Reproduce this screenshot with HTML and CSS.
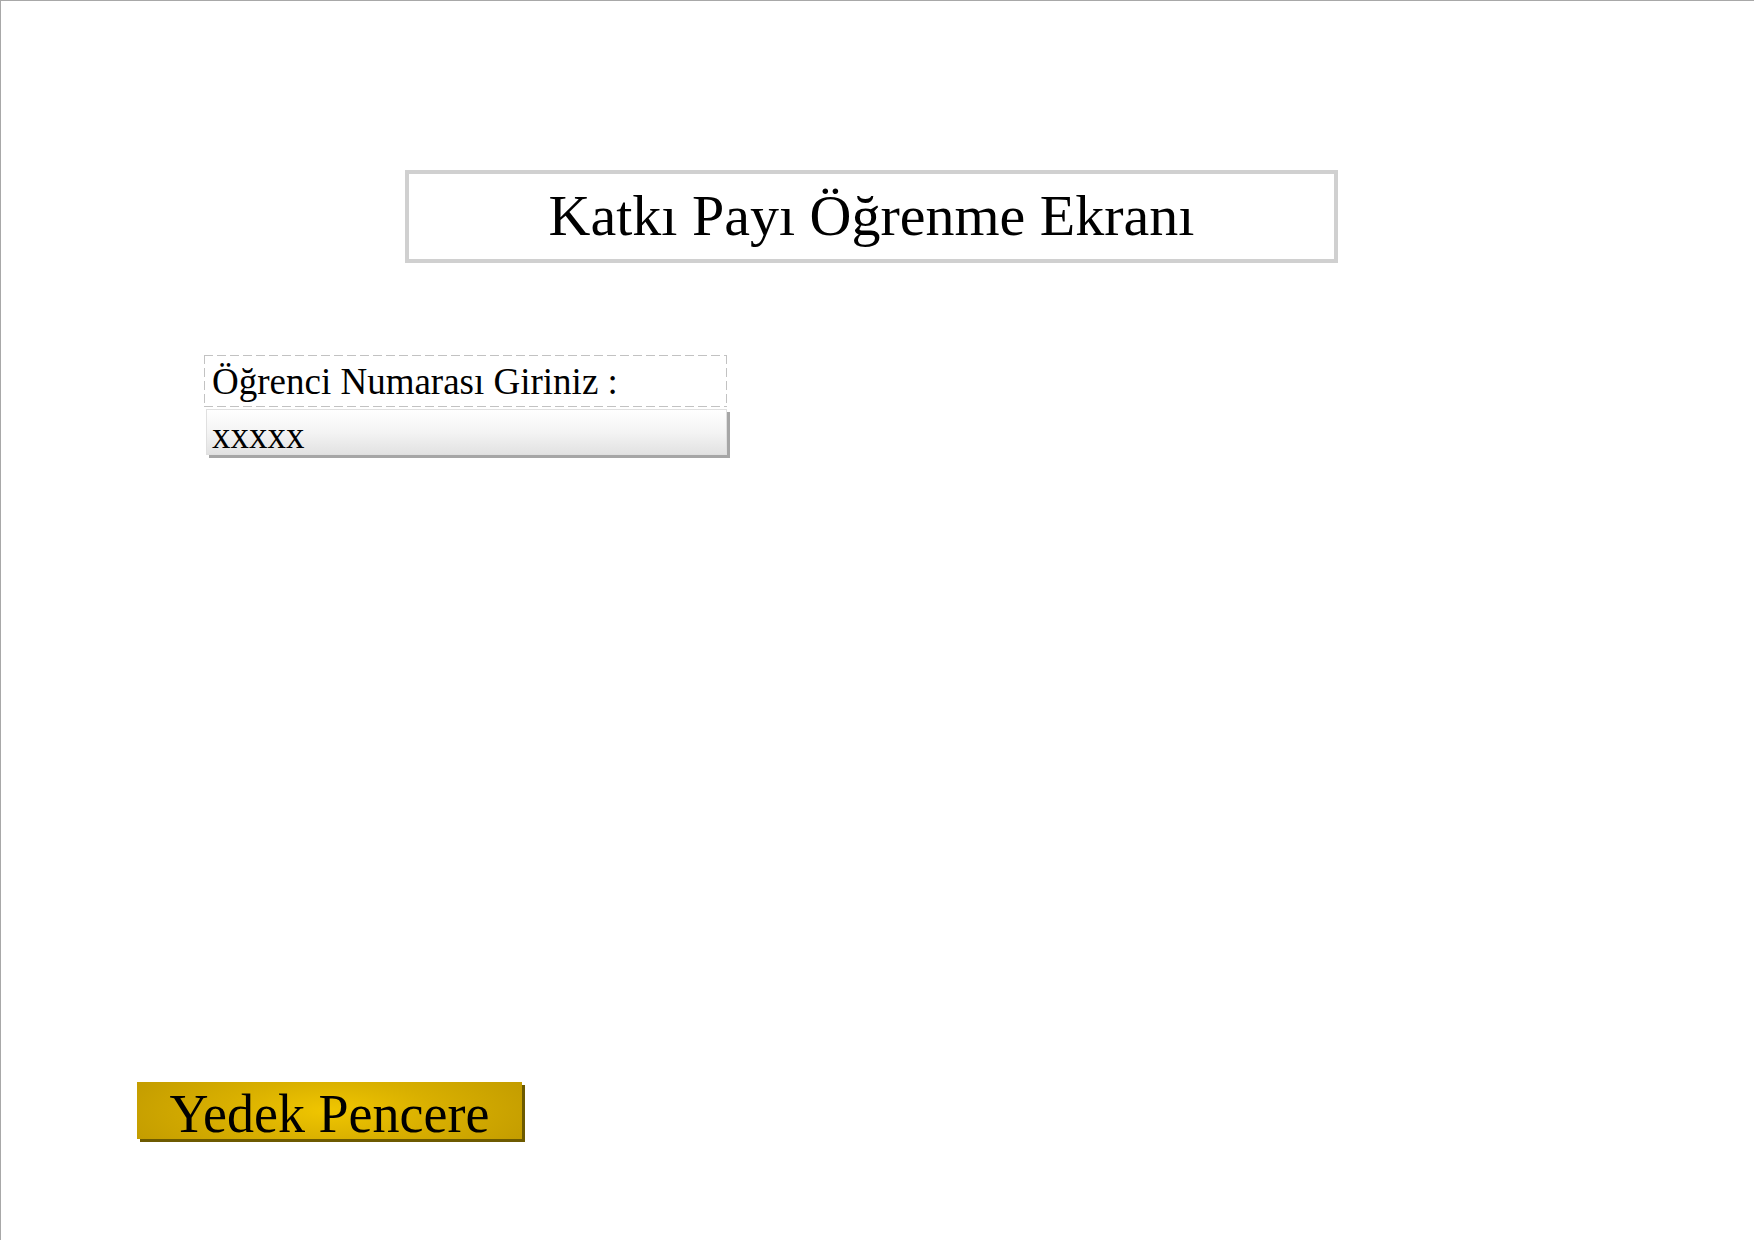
FILE: index.html
```html
<!DOCTYPE html>
<html lang="tr">
<head>
<meta charset="utf-8">
<title>Katkı Payı Öğrenme Ekranı</title>
<link rel="stylesheet" href="styles.css">
</head>
<body>
<div class="page">
  <div class="title-box"><h1 class="title">Katkı Payı Öğrenme Ekranı</h1></div>
  <div class="field">
    <div class="label">Öğrenci Numarası Giriniz :</div>
    <div class="input">xxxxx</div>
  </div>
  <div class="button">Yedek Pencere</div>
</div>
</body>
</html>
```
FILE: styles.css
```css
html, body {
  margin: 0;
  padding: 0;
  background: #ffffff;
}
.page {
  box-sizing: border-box;
  width: 1754px;
  height: 1240px;
  border-top: 1px solid #a8a8a8;
  border-left: 1px solid #a8a8a8;
  font-family: "Liberation Serif", "Times New Roman", serif;
  color: #000;
  display: flex;
  flex-direction: column;
  align-items: flex-start;
  padding-top: 169px;
}
.title-box {
  box-sizing: border-box;
  margin-left: 404px;
  width: 933px;
  height: 93px;
  border: 4px solid #d0d0d0;
  display: flex;
  align-items: center;
  justify-content: center;
}
.title {
  margin: 0;
  font-weight: normal;
  font-size: 58px;
  line-height: 58px;
  margin-top: -2px;
}
.field {
  margin-left: 203px;
  margin-top: 92px;
  display: flex;
  flex-direction: column;
  align-items: flex-start;
}
.label {
  box-sizing: border-box;
  width: 523px;
  height: 52px;
  background-image:
    repeating-linear-gradient(to right, #c2c2c2 0 9px, transparent 9px 13px),
    repeating-linear-gradient(to right, #c2c2c2 0 9px, transparent 9px 13px),
    repeating-linear-gradient(to bottom, #c2c2c2 0 9px, transparent 9px 13px),
    repeating-linear-gradient(to bottom, #c2c2c2 0 9px, transparent 9px 13px);
  background-size: 100% 1px, 100% 1px, 1px 100%, 1px 100%;
  background-position: 0 0, 0 100%, 0 0, 100% 0;
  background-repeat: no-repeat;
  font-size: 37px;
  line-height: 45px;
  padding: 4px 0 0 8px;
  white-space: nowrap;
}
.input {
  box-sizing: border-box;
  margin-left: 2px;
  margin-top: 2px;
  width: 521px;
  height: 46px;
  background: linear-gradient(to bottom, #ffffff 0%, #f4f4f4 50%, #e2e2e2 100%);
  border: 1px solid #e0e0e0;
  box-shadow: 3px 3px 0 #a6a6a6;
  font-size: 37px;
  line-height: 51px;
  padding-left: 5px;
  white-space: nowrap;
}
.button {
  box-sizing: border-box;
  margin-left: 136px;
  margin-top: 627px;
  width: 385px;
  height: 57px;
  background: radial-gradient(ellipse 55% 110% at 50% 50%, #f0c600 0%, #d8af00 50%, #c49d00 100%);
  box-shadow: 3px 3px 0 #6d5a00;
  font-size: 54px;
  line-height: 64px;
  text-align: center;
  white-space: nowrap;
}
```
